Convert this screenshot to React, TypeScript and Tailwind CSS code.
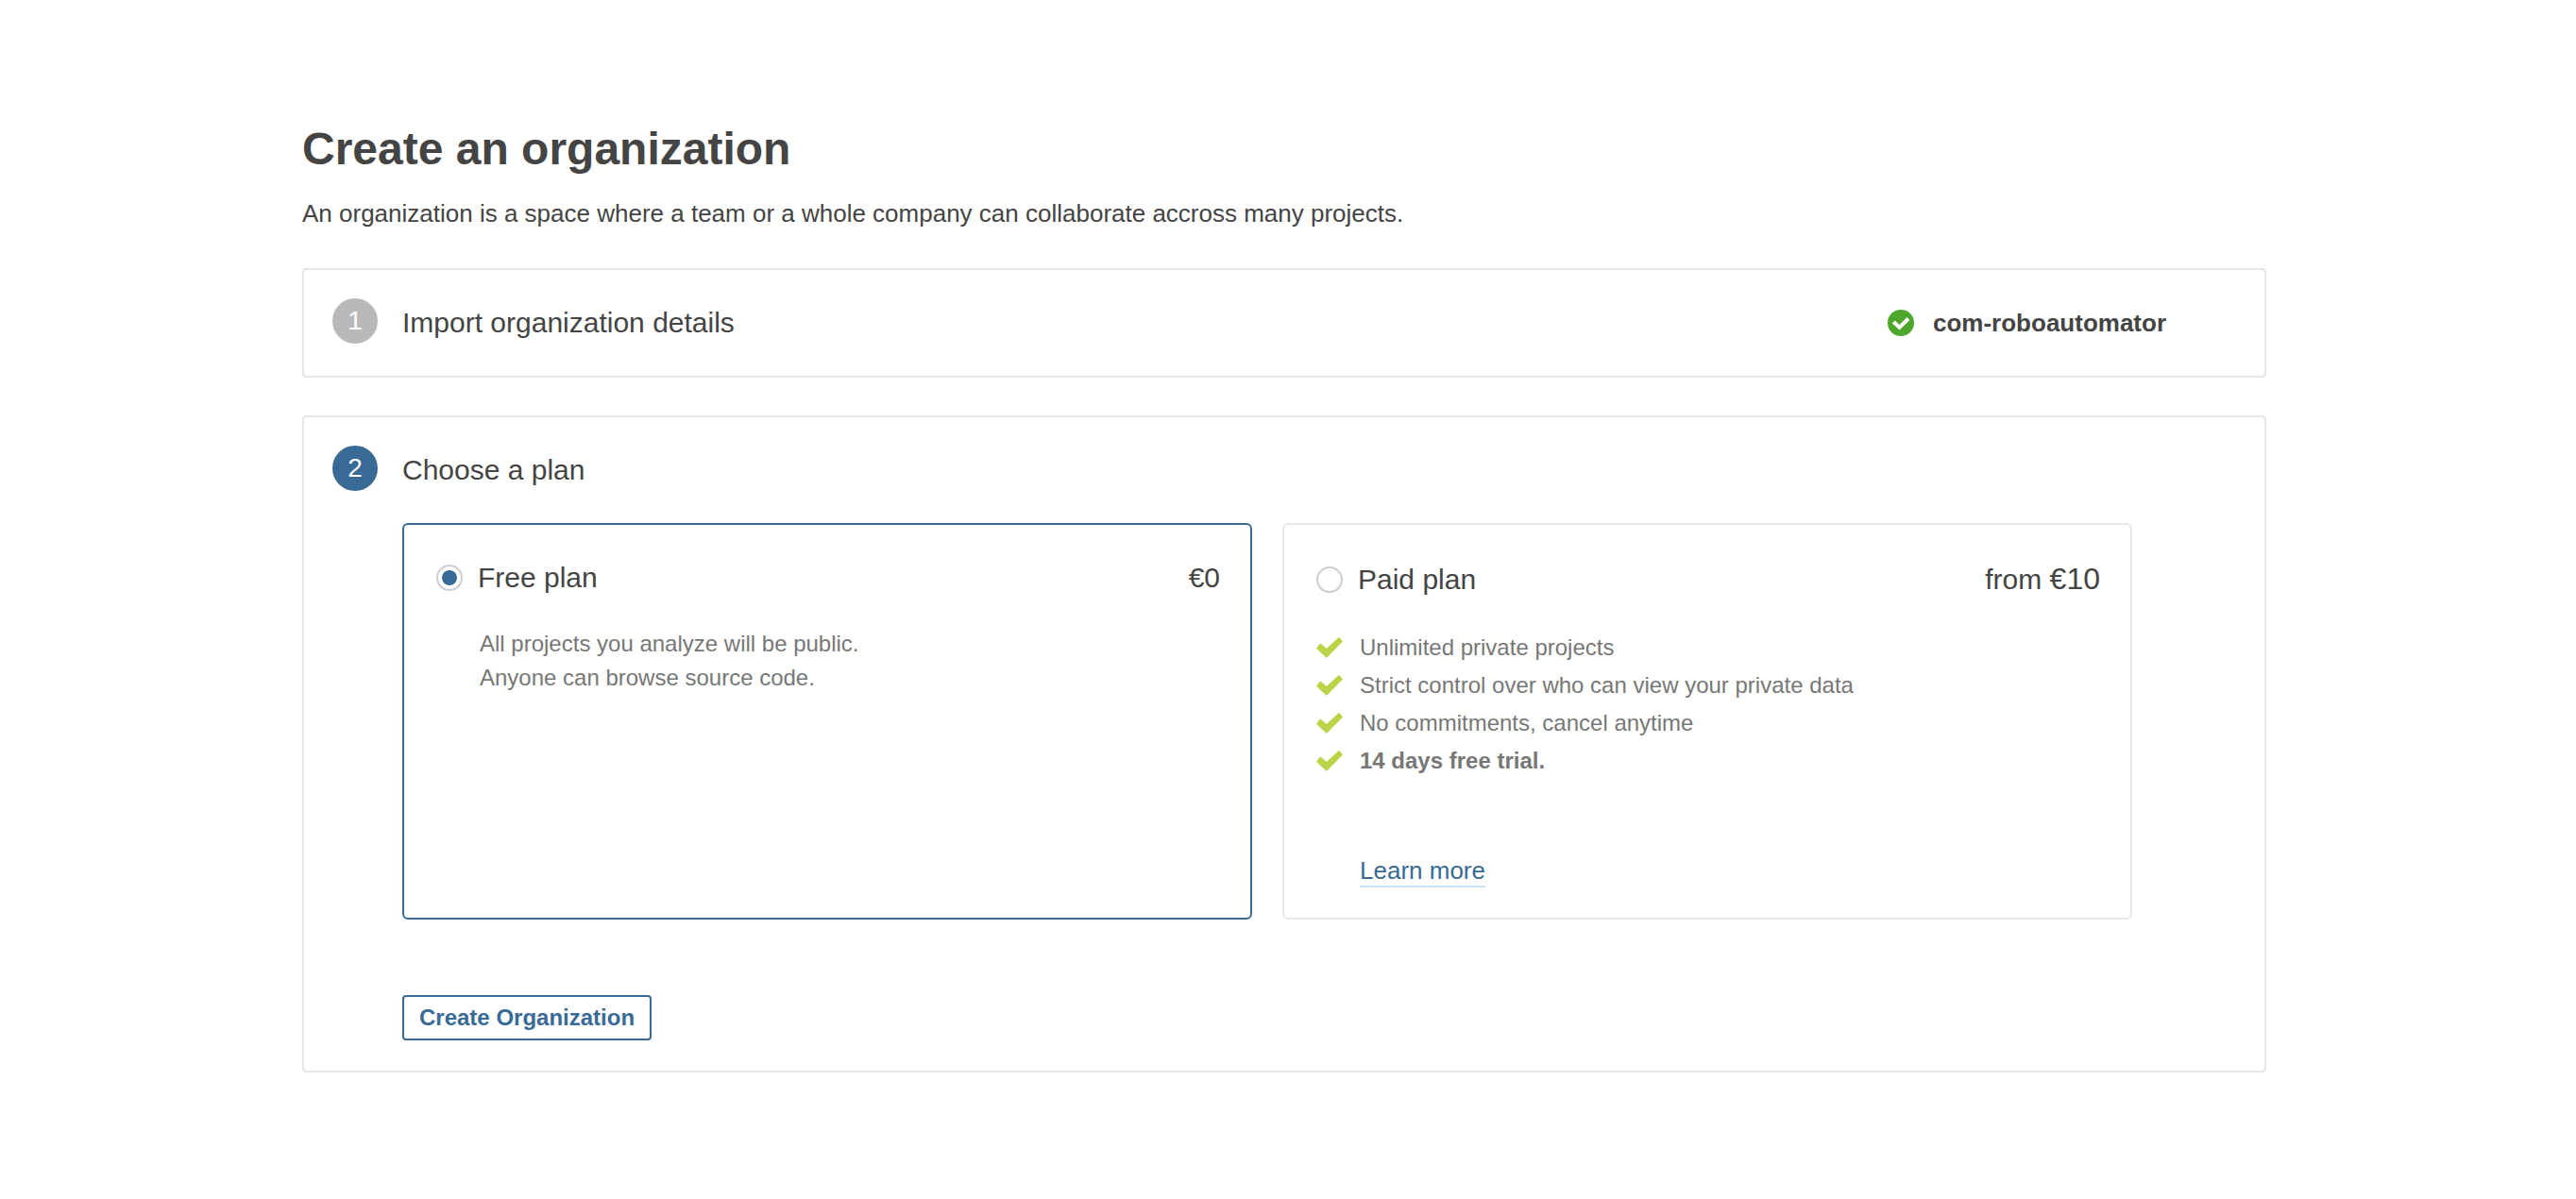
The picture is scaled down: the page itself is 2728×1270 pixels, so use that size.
import { useState, type ReactNode } from "react";

function CheckIcon() {
  return (
    <svg viewBox="0 0 28 22" className="h-[22px] w-7 shrink-0" aria-hidden="true">
      <path
        d="M1.200 11.500 4.700 7.800 10.700 13.500 23.800 1.200 26.800 4.400 10.700 20.600z"
        fill="#b9d549"
        stroke="#b9d549"
        strokeWidth="2"
        strokeLinejoin="round"
      />
    </svg>
  );
}

function SuccessIcon() {
  return (
    <svg viewBox="0 0 28 28" className="size-7 shrink-0" aria-hidden="true">
      <circle cx="14" cy="14" r="14" fill="#4ea72d" />
      <path d="M6.200 12.900 12.600 18.700 22 9.500" fill="none" stroke="#fff" strokeWidth="4" />
    </svg>
  );
}

function StepNumber({ value, active = false }: { value: number; active?: boolean }) {
  return (
    <span
      className={`flex size-12 shrink-0 items-center justify-center rounded-full text-[28px] leading-none text-white ${
        active ? "bg-[#386a95]" : "bg-[#b9b9b9]"
      }`}
    >
      {value}
    </span>
  );
}

function StepHeader({ value, title, active }: { value: number; title: string; active?: boolean }) {
  return (
    <div className="flex items-center gap-[26px]">
      <StepNumber value={value} active={active} />
      <h2 className="pt-1 text-[30px] leading-9">{title}</h2>
    </div>
  );
}

type PlanProps = {
  id: string;
  title: string;
  price: ReactNode;
  selected: boolean;
  onSelect: () => void;
  children: ReactNode;
};

function PlanCard({ id, title, price, selected, onSelect, children }: PlanProps) {
  return (
    <div
      className={`flex min-h-[420px] flex-1 flex-col rounded-md border-2 px-8 pt-[38px] pb-8 ${
        selected ? "border-[#386a95]" : "border-[#e6e6e6]"
      }`}
    >
      <div className="flex items-center justify-between text-[30px]">
        <label htmlFor={id} className="flex items-center gap-4 pl-0.5 leading-9">
          <input
            id={id}
            type="radio"
            name="plan"
            checked={selected}
            onChange={onSelect}
            className="size-7 appearance-none rounded-full border-2 border-[#cdcdcd] bg-white bg-clip-content p-1 checked:bg-[#386a95]"
          />
          {title}
        </label>
        {price}
      </div>
      {children}
    </div>
  );
}

const features = [
  "Unlimited private projects",
  "Strict control over who can view your private data",
  "No commitments, cancel anytime",
];

export default function App() {
  const [plan, setPlan] = useState("free");

  return (
    <div className="bg-white pr-2 font-['Liberation_Sans',Arial,sans-serif] text-[#444]">
      <main className="mx-auto max-w-[2080px] pt-32 pb-16">
        <h1 className="text-5xl leading-[60px] font-bold">Create an organization</h1>
        <p className="mt-[22px] text-[26px] leading-8">
          An organization is a space where a team or a whole company can collaborate accross many projects.
        </p>

        <section className="mt-[42px] flex items-center justify-between rounded-sm border-2 border-[#e6e6e6] pt-[30px] pr-[104px] pb-[34px] pl-[30px]">
          <StepHeader value={1} title="Import organization details" />
          <div className="flex items-center gap-5 pt-1">
            <SuccessIcon />
            <strong className="text-[26px] leading-8">com-roboautomator</strong>
          </div>
        </section>

        <section className="mt-10 rounded-sm border-2 border-[#e6e6e6] px-[30px] pt-[30px] pb-8">
          <StepHeader value={2} title="Choose a plan" active />
          <form className="mt-[34px] ml-[74px]" onSubmit={(e) => e.preventDefault()}>
            <div className="mr-[110px] flex gap-8">
              <PlanCard
                id="plan-free"
                title="Free plan"
                price={<span className="leading-9">€0</span>}
                selected={plan === "free"}
                onSelect={() => setPlan("free")}
              >
                <p className="mt-[34px] ml-12 text-2xl leading-9 text-[#777]">
                  All projects you analyze will be public.
                  <br />
                  Anyone can browse source code.
                </p>
              </PlanCard>
              <PlanCard
                id="plan-paid"
                title="Paid plan"
                price={
                  <span className="leading-[38px]">
                    from <span className="text-[32px]">€10</span>
                  </span>
                }
                selected={plan === "paid"}
                onSelect={() => setPlan("paid")}
              >
                <ul className="mt-[33px] ml-0.5 text-2xl leading-10 text-[#777]">
                  {features.map((feature) => (
                    <li key={feature} className="flex items-center gap-[18px]">
                      <CheckIcon />
                      {feature}
                    </li>
                  ))}
                  <li className="flex items-center gap-[18px] font-bold">
                    <CheckIcon />
                    14 days free trial.
                  </li>
                </ul>
                <a
                  href="#learn-more"
                  className="mt-auto ml-12 self-start border-b-2 border-[#cae3f2] text-[26px] leading-8 text-[#386a95]"
                >
                  Learn more
                </a>
              </PlanCard>
            </div>
            <button
              type="submit"
              className="mt-20 block rounded-sm border-2 border-[#386a95] px-4 text-2xl leading-[44px] font-bold text-[#386a95]"
            >
              Create Organization
            </button>
          </form>
        </section>
      </main>
    </div>
  );
}
